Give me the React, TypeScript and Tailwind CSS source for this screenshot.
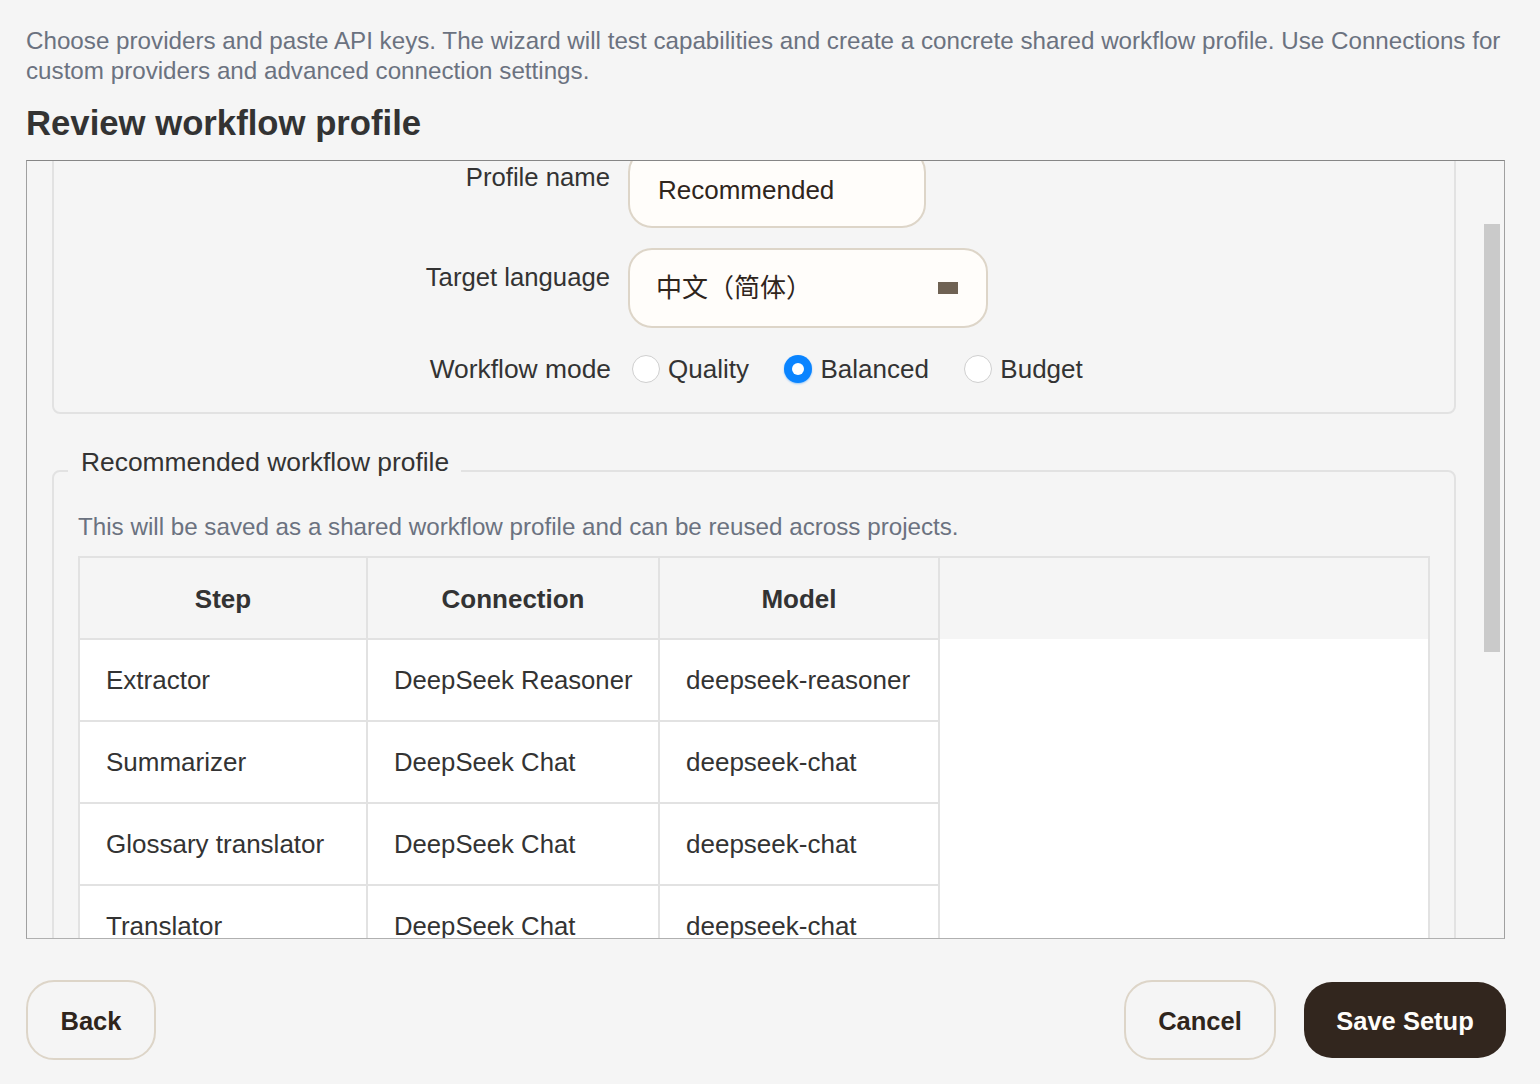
const rows = [
  ["Extractor", "DeepSeek Reasoner", "deepseek-reasoner"],
  ["Summarizer", "DeepSeek Chat", "deepseek-chat"],
  ["Glossary translator", "DeepSeek Chat", "deepseek-chat"],
  ["Translator", "DeepSeek Chat", "deepseek-chat"],
];

const fontStack = "font-['Liberation_Sans','Noto_Sans_CJK_SC',sans-serif]";

const Radio = ({ label, checked }: { label: string; checked?: boolean }) => (
  <div className="flex items-center gap-2">
    {checked ? (
      <span className="flex h-7 w-7 items-center justify-center rounded-full bg-[#0a84ff] shadow-[0_1px_2px_rgba(10,132,255,0.4)]">
        <span className="h-3 w-3 rounded-full bg-white" />
      </span>
    ) : (
      <span className="h-7 w-7 rounded-full border border-[#cfcfcf] bg-white" />
    )}
    <span>{label}</span>
  </div>
);

const App = () => {
  return (
    <div className={`flex h-[1084px] w-[1540px] flex-col overflow-hidden bg-[#f5f5f5] pl-[26px] pr-[35px] pt-[26px] text-[26px] leading-[30px] text-[#333333] ${fontStack}`}>
      <p className="text-[24.2px] text-[#6b7280]">
        Choose providers and paste API keys. The wizard will test capabilities and create a concrete shared workflow profile. Use Connections for custom providers and advanced connection settings.
      </p>
      <h1 className="mt-[15px] text-[34.7px] font-bold leading-[44px]">Review workflow profile</h1>

      <div className="relative mt-[15px] h-[779px] shrink-0 overflow-hidden border border-t-[#868686] border-r-[#a0a0a0] border-b-[#b0b0b0] border-l-[#a0a0a0] pl-[25px] pr-[48px]">
        <fieldset className="mt-[-40px] rounded-lg border-2 border-[#e2e2e2] pb-7 pt-[25px]">
          <div className="flex items-start gap-[18px]">
            <label className="w-[556px] pt-[14px] text-right text-[25.7px]">Profile name</label>
            <div className="flex h-20 w-[298px] items-center rounded-3xl border-2 border-[#ddd5c8] bg-[#fffdfa] pl-7 pt-1 text-[#2f251c]">
              Recommended
            </div>
          </div>
          <div className="mt-5 flex items-start gap-[18px]">
            <label className="w-[556px] pt-[14px] text-right text-[25.7px]">Target language</label>
            <div className="flex h-20 w-[360px] items-center justify-between rounded-3xl border-2 border-[#ddd5c8] bg-[#fffdfa] pl-[26px] pr-7 text-[#2f251c]">
              <span>中文（简体）</span>
              <span className="h-3 w-5 bg-[#6f6253]" />
            </div>
          </div>
          <div className="mt-[26px] flex items-center gap-[21px]">
            <label className="w-[557px] text-right text-[26.4px]">Workflow mode</label>
            <div className="flex items-center gap-[35.5px]">
              <Radio label="Quality" />
              <Radio label="Balanced" checked />
              <Radio label="Budget" />
            </div>
          </div>
        </fieldset>

        <fieldset className="mt-[33px] rounded-lg border-2 border-[#e2e2e2] px-6 pt-[17px]">
          <legend className="ml-[-10px] pb-[18px] pl-[13px] pr-[12px] text-[26.4px]">Recommended workflow profile</legend>
          <p className="text-[24.2px] text-[#6b7280]">This will be saved as a shared workflow profile and can be reused across projects.</p>
          <table className="mt-[14px] w-[1352px] table-fixed border-collapse border-2 border-[#e2e2e2] bg-white">
            <thead>
              <tr className="h-[82px] bg-[#f5f5f5]">
                <th className="w-[288px] border-2 border-[#e2e2e2] pt-[2px] font-bold">Step</th>
                <th className="w-[292px] border-2 border-[#e2e2e2] pt-[2px] font-bold">Connection</th>
                <th className="w-[280px] border-2 border-[#e2e2e2] pt-[2px] font-bold">Model</th>
                <th />
              </tr>
            </thead>
            <tbody>
              {rows.map((row) => (
                <tr key={row[0]} className="h-[82px]">
                  <td className="whitespace-nowrap border-2 border-[#e2e2e2] pl-[26px]">{row[0]}</td>
                  <td className="whitespace-nowrap border-2 border-[#e2e2e2] pl-[26px] text-[25.7px]">{row[1]}</td>
                  <td className="whitespace-nowrap border-2 border-[#e2e2e2] pl-[26px]">{row[2]}</td>
                  <td />
                </tr>
              ))}
            </tbody>
          </table>
        </fieldset>

        <div className="absolute right-[4px] top-[63px] h-[428px] w-4 bg-[#cacaca]" />
      </div>

      <div className="flex items-center justify-between pt-[41px] text-[25.5px] font-bold text-[#2f251c]">
        <button className="h-20 w-[130px] rounded-[28px] border-2 border-[#ddd5c8] pt-[2px]">Back</button>
        <div className="flex items-center gap-7">
          <button className="h-20 w-[152px] rounded-[28px] border-2 border-[#ddd5c8] pt-[2px]">Cancel</button>
          <button className="mr-[-1px] h-[76px] w-[202px] rounded-[28px] bg-[#32261e] pt-[2px] text-[#fffdfa]">Save Setup</button>
        </div>
      </div>
    </div>
  );
};

export default App;
